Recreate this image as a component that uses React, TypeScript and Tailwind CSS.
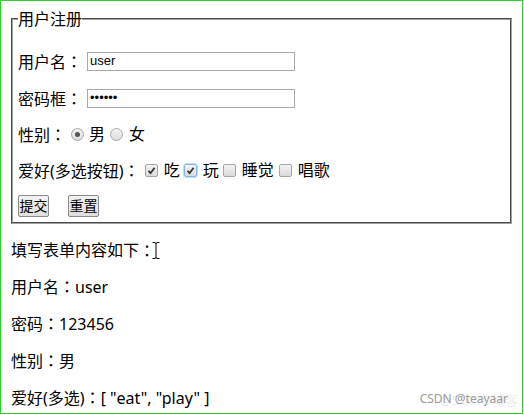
import React from "react"

const font = "font-['Noto_Sans','Noto_Sans_CJK_SC',sans-serif]"

// centred full-width colon, as the reference's font draws it
function Colon() {
  return <span className="font-['Noto_Sans_CJK_TC',sans-serif]">：</span>
}

function Radio({ checked }: { checked?: boolean }) {
  return (
    <span className="flex h-[13px] w-[13px] items-center justify-center rounded-full border border-[#a6a6a6] bg-gradient-to-b from-[#f2f2f2] to-[#dcdcdc]">
      {checked && <span className="h-[5px] w-[5px] rounded-full bg-[#555]" />}
    </span>
  )
}

function Checkbox({ checked, focused }: { checked?: boolean; focused?: boolean }) {
  return (
    <span
      className={`flex h-[13px] w-[13px] items-center justify-center rounded-[2px] border bg-gradient-to-b from-[#f4f4f4] to-[#dadada] ${
        focused ? "border-[#7eb4ea] outline outline-1 outline-[#c5dcf3]" : "border-[#a6a6a6]"
      }`}
    >
      {checked && (
        <svg width="9" height="9" viewBox="0 0 9 9">
          <path d="M1.5 4.8 L3.6 7 L7.6 1.8" fill="none" stroke="#333" strokeWidth="1.8" />
        </svg>
      )}
    </span>
  )
}

function Btn({ label }: { label: string }) {
  return (
    <button className="flex h-[22px] w-[31px] items-center justify-center rounded-[2px] border border-[#8a8a8a] bg-gradient-to-b from-[#f3f3f3] to-[#dedede] text-[14px] leading-none text-black">
      {label}
    </button>
  )
}

export default function App() {
  return (
    <div className={`h-[414px] w-[523px] border border-[#33cc33] bg-white text-[16px] text-black ${font}`}>
      <div className="px-[8px] pt-[8px]">
        <fieldset className="mx-[2px] border-2 border-[#a0a0a0] px-[5px] pb-[5px] pt-[21px] [border-style:groove]">
          <legend className="p-0 leading-[20px]">用户注册</legend>

          <div className="flex h-[22px] items-center">
            <span>
              用户名<Colon />
            </span>
            <input
              readOnly
              value="user"
              className="ml-[5px] h-[19px] w-[208px] border border-[#a9a9a9] px-[2px] font-['Liberation_Sans',sans-serif] text-[13px] outline-none"
            />
          </div>

          <div className="mt-[15px] flex h-[22px] items-center">
            <span>
              密码框<Colon />
            </span>
            <input
              readOnly
              type="password"
              value="123456"
              className="ml-[5px] h-[19px] w-[208px] border border-[#a9a9a9] px-[2px] font-['Liberation_Sans',sans-serif] text-[13px] outline-none"
            />
          </div>

          <div className="mt-[14px] flex h-[22px] items-center">
            <span>
              性别<Colon />
            </span>
            <span className="ml-[5px]">
              <Radio checked />
            </span>
            <span className="ml-[5px]">男</span>
            <span className="ml-[5px]">
              <Radio />
            </span>
            <span className="ml-[6px]">女</span>
          </div>

          <div className="mt-[14px] flex h-[22px] items-center">
            <span>
              爱好(多选按钮)<Colon />
            </span>
            <span className="ml-[5px]">
              <Checkbox checked />
            </span>
            <span className="ml-[6px]">吃</span>
            <span className="ml-[4px]">
              <Checkbox checked focused />
            </span>
            <span className="ml-[6px]">玩</span>
            <span className="ml-[4px]">
              <Checkbox />
            </span>
            <span className="ml-[6px]">睡觉</span>
            <span className="ml-[5px]">
              <Checkbox />
            </span>
            <span className="ml-[6px]">唱歌</span>
          </div>

          <div className="mt-[14px] flex h-[22px] items-center gap-[19px]">
            <Btn label="提交" />
            <Btn label="重置" />
          </div>
        </fieldset>
      </div>

      <div className="relative px-[10px] leading-[20px]">
        <p className="mt-[16px] flex items-center">
          填写表单内容如下<Colon />
          <svg className="ml-[-3px]" width="8" height="17" viewBox="0 0 8 17">
            <path d="M0.5 0.5 H3 M5 0.5 H7.5 M4 1 V16 M0.5 16.5 H3 M5 16.5 H7.5 M3 1 H5 M3 16 H5" stroke="#000" strokeWidth="1" fill="none" />
          </svg>
        </p>
        <p className="mt-[16px]">
          用户名<Colon />user
        </p>
        <p className="mt-[16px]">
          密码<Colon />123456
        </p>
        <p className="mt-[16px]">
          性别<Colon />男
        </p>
        <p className="mt-[16px]">
          爱好(多选)<Colon />[ "eat", "play" ]
        </p>

        <span className="absolute bottom-[-2px] right-[4px] text-[13px] text-[#ececec]">@51CTO博客</span>
        <span className="absolute bottom-[-1px] right-[14px] text-[12px] text-[#9a9a9a]">CSDN @teayaar</span>
      </div>
    </div>
  )
}
